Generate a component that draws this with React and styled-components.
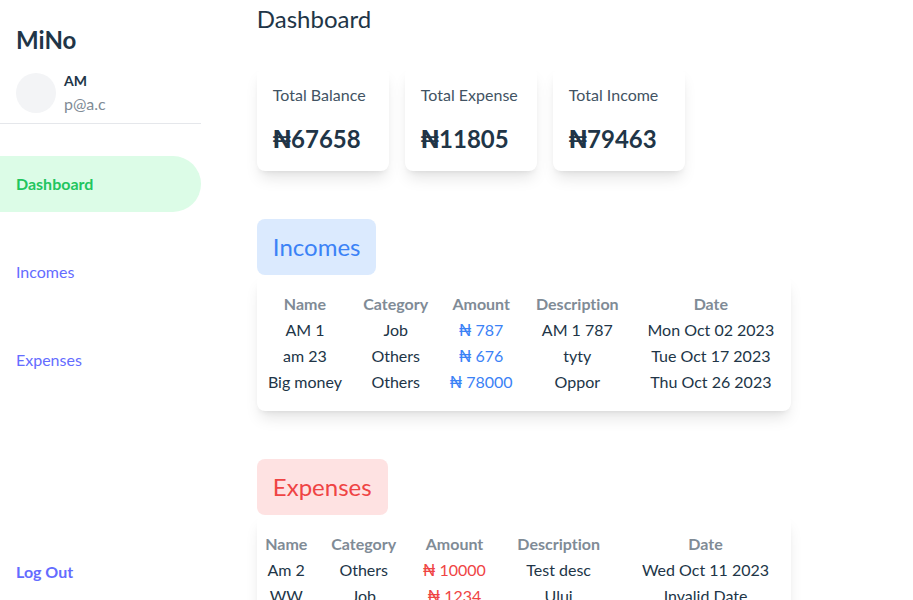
import React from "react";
import styled, { createGlobalStyle } from "styled-components";

const GlobalStyle = createGlobalStyle`
  *, *::before, *::after { box-sizing: border-box; }
  body {
    margin: 0;
    background: #fff;
    color: #213547;
    font-family: Lato, "Noto Sans", sans-serif;
    font-size: 16px;
    font-variant-ligatures: none;
    line-height: 24px;
  }
  h1, h2, p { margin: 0; }
`;

const Page = styled.div`
  display: grid;
  grid-template-columns: 22% 1fr;
  height: 100vh;
`;

const Sidebar = styled.aside`
  display: flex;
  flex-direction: column;
  height: 100vh;
  padding: 24px 0 16px;
`;

const Brand = styled.p`
  padding: 0 16px;
  font-size: 24px;
  font-weight: 700;
  line-height: 32px;
`;

const Profile = styled.div`
  display: flex;
  align-items: center;
  gap: 8px;
  margin-top: 14px;
  padding: 0 16px 8px;
  border-bottom: 1px solid #e5e7eb;
`;

const Avatar = styled.div`
  width: 40px;
  height: 40px;
  border-radius: 50%;
  background: #f3f4f6;
`;

const UserName = styled.p`
  font-size: 14px;
  font-weight: 700;
  line-height: 22px;
`;

const Email = styled.p`
  color: #808b96;
  line-height: 23px;
`;

const Nav = styled.nav`
  display: flex;
  flex-direction: column;
  gap: 32px;
  margin-top: 32px;
`;

const NavLink = styled.a`
  padding: 16px;
  border-radius: 0 28px 28px 0;
  background: ${(p) => (p.$active ? "#dcfce7" : "transparent")};
  color: ${(p) => (p.$active ? "#22c55e" : "#646cff")};
  font-weight: ${(p) => (p.$active ? 700 : 400)};
  text-decoration: none;
`;

const LogOut = styled.button`
  align-self: flex-start;
  margin-top: auto;
  padding: 0 16px;
  border: 0;
  background: none;
  color: #646cff;
  font: inherit;
  font-weight: 700;
  cursor: pointer;
`;

const Main = styled.main`
  height: 100vh;
  overflow: hidden;
  padding: 3px 56px 0;
`;

const Title = styled.h1`
  font-size: 24px;
  font-weight: 400;
  line-height: 32px;
`;

const Totals = styled.div`
  display: flex;
  gap: 16px;
  margin-top: 32px;
`;

const Card = styled.div`
  border-radius: 8px;
  background: #fff;
  box-shadow: 0 10px 15px -3px rgba(0, 0, 0, 0.1), 0 4px 6px -4px rgba(0, 0, 0, 0.1);
`;

const TotalCard = styled(Card)`
  display: flex;
  flex-direction: column;
  gap: 16px;
  min-width: 132px;
  padding: 16px;
`;

const TotalLabel = styled.p`
  color: #425363;
`;

const TotalValue = styled.p`
  font-size: 24px;
  font-weight: 700;
  line-height: 32px;
`;

const Naira = styled.span`
  font-family: Inter, sans-serif;
  line-height: 1;
`;

const Section = styled.section`
  width: 89%;
  margin-top: 48px;
`;

const tones = {
  blue: { text: "#3b82f6", fill: "#dbeafe" },
  red: { text: "#ef4444", fill: "#fee2e2" },
};

const SectionTitle = styled.h2`
  width: fit-content;
  padding: 12px 16px;
  border-radius: 8px;
  background: ${(p) => tones[p.$tone].fill};
  color: ${(p) => tones[p.$tone].text};
  font-size: 24px;
  font-weight: 400;
  line-height: 32px;
`;

const TableCard = styled(Card)`
  padding: 16px 0;
`;

const Table = styled.table`
  width: 100%;
  border-collapse: collapse;
  text-align: center;
`;

const Th = styled.th`
  width: ${(p) => p.$share}%;
  padding: 1px;
  color: #808b96;
  font-weight: 700;
`;

const Td = styled.td`
  padding: 1px;
  color: ${(p) => (p.$tone ? tones[p.$tone].text : "inherit")};
`;

const columns = ["Name", "Category", "Amount", "Description", "Date"];

const totals = [
  ["Total Balance", 67658],
  ["Total Expense", 11805],
  ["Total Income", 79463],
];

const incomes = [
  ["AM 1", "Job", 787, "AM 1 787", "Mon Oct 02 2023"],
  ["am 23", "Others", 676, "tyty", "Tue Oct 17 2023"],
  ["Big money", "Others", 78000, "Oppor", "Thu Oct 26 2023"],
];

const expenses = [
  ["Am 2", "Others", 10000, "Test desc", "Wed Oct 11 2023"],
  ["WW", "Job", 1234, "Ului", "Invalid Date"],
];

function Records({ title, tone, rows, shares }) {
  return (
    <Section>
      <SectionTitle $tone={tone}>{title}</SectionTitle>
      <TableCard>
        <Table aria-label={title}>
          <thead>
            <tr>
              {columns.map((c, i) => (
                <Th key={c} scope="col" $share={shares[i]}>{c}</Th>
              ))}
            </tr>
          </thead>
          <tbody>
            {rows.map(([name, category, amount, description, date]) => (
              <tr key={name}>
                <Td>{name}</Td>
                <Td>{category}</Td>
                <Td $tone={tone}><Naira>₦</Naira> {amount}</Td>
                <Td>{description}</Td>
                <Td>{date}</Td>
              </tr>
            ))}
          </tbody>
        </Table>
      </TableCard>
    </Section>
  );
}

export default function App() {
  return (
    <>
      <GlobalStyle />
      <Page>
        <Sidebar>
          <Brand>MiNo</Brand>
          <Profile>
            <Avatar />
            <div>
              <UserName>AM</UserName>
              <Email>p@a.c</Email>
            </div>
          </Profile>
          <Nav>
            <NavLink href="#dashboard" $active aria-current="page">Dashboard</NavLink>
            <NavLink href="#incomes">Incomes</NavLink>
            <NavLink href="#expenses">Expenses</NavLink>
          </Nav>
          <LogOut type="button">Log Out</LogOut>
        </Sidebar>
        <Main>
          <Title>Dashboard</Title>
          <Totals>
            {totals.map(([label, value]) => (
              <TotalCard key={label}>
                <TotalLabel>{label}</TotalLabel>
                <TotalValue><Naira>₦</Naira>{value}</TotalValue>
              </TotalCard>
            ))}
          </Totals>
          <Records title="Incomes" tone="blue" rows={incomes} shares={[18, 16, 16, 20, 30]} />
          <Records title="Expenses" tone="red" rows={expenses} shares={[11, 18, 16, 23, 32]} />
        </Main>
      </Page>
    </>
  );
}
